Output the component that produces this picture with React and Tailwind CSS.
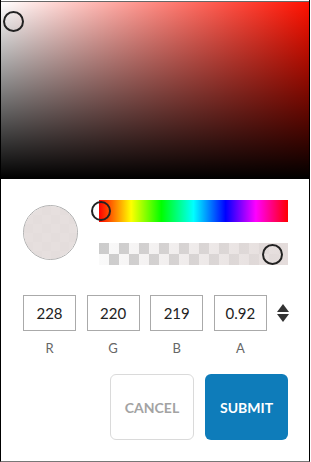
import React from "react";

export default function App() {
  const fields = [
    { v: "228", l: "R" },
    { v: "220", l: "G" },
    { v: "219", l: "B" },
    { v: "0.92", l: "A" },
  ];
  return (
    <div
      className="w-[310px] h-[462px] border-l border-r border-b border-l-black border-r-black border-b-[#777] bg-white flex flex-col"
      style={{ fontFamily: "Lato, 'Open Sans', sans-serif" }}
    >
      <div className="mt-px border-t border-[#666]" />
      <div className="relative h-[177px] bg-[linear-gradient(to_top,#000,rgba(0,0,0,0)),linear-gradient(to_right,#fff,#ff1100)]">
        <div className="absolute left-[2px] top-[9px] w-[21px] h-[21px] rounded-full border-2 border-[#222]" />
      </div>

      <div className="flex items-center pl-[22px] pt-[21px] gap-[21px]">
        <div className="relative w-[55px] h-[55px] rounded-full border border-[#b0b0b0] overflow-hidden bg-[conic-gradient(#fff_25%,#ddd_0_50%,#fff_0_75%,#ddd_0)] bg-[length:18px_18px]">
          <div className="absolute inset-0 bg-[rgba(228,220,219,0.92)]" />
        </div>
        <div className="flex flex-col gap-[21px] w-[189px]">
          <div className="relative h-[22px] bg-[linear-gradient(to_right,#f00_0%,#ff0_17%,#0f0_33%,#0ff_50%,#00f_67%,#f0f_83%,#f00_100%)]">
            <div className="absolute left-[-8px] top-px w-[20px] h-[20px] rounded-full border-2 border-[#222]" />
          </div>
          <div className="relative h-[22px] bg-[conic-gradient(#fafafa_25%,#cccccc_0_50%,#fafafa_0_75%,#cccccc_0)] bg-[length:20px_22px]">
            <div className="absolute inset-0 bg-[linear-gradient(to_right,rgba(228,220,219,0),rgba(228,220,219,1))]" />
            <div className="absolute left-[163px] top-px w-[21px] h-[21px] rounded-full border-2 border-[#222]" />
          </div>
        </div>
      </div>

      <div className="flex items-start pl-[22px] pt-[30px] gap-[10.6px]">
        {fields.map((f) => (
          <div key={f.l} className="flex flex-col items-center w-[53px]">
            <div className="w-[53px] h-[36px] border border-[#aaa] flex items-center justify-center text-[15px] text-[#222]">
              {f.v}
            </div>
            <div className="mt-[9px] text-[13px] text-[#666] leading-[16px]">{f.l}</div>
          </div>
        ))}
        <div className="flex flex-col items-center gap-[2px] pt-[9px]">
          <svg width="12" height="8" viewBox="0 0 12 8">
            <polygon points="6,0 12,8 0,8" fill="#333" />
          </svg>
          <svg width="12" height="8" viewBox="0 0 12 8">
            <polygon points="0,0 12,0 6,8" fill="#333" />
          </svg>
        </div>
      </div>

      <div className="flex justify-end gap-[11px] pr-[21px] pt-[18px]">
        <button className="w-[84px] h-[66px] rounded-[6px] border border-[#dadada] bg-white text-[14px] font-bold text-[#a3a3a3]">
          CANCEL
        </button>
        <button className="w-[83px] h-[66px] rounded-[6px] bg-[#0e7cba] text-[14px] font-bold text-white">
          SUBMIT
        </button>
      </div>
    </div>
  );
}
